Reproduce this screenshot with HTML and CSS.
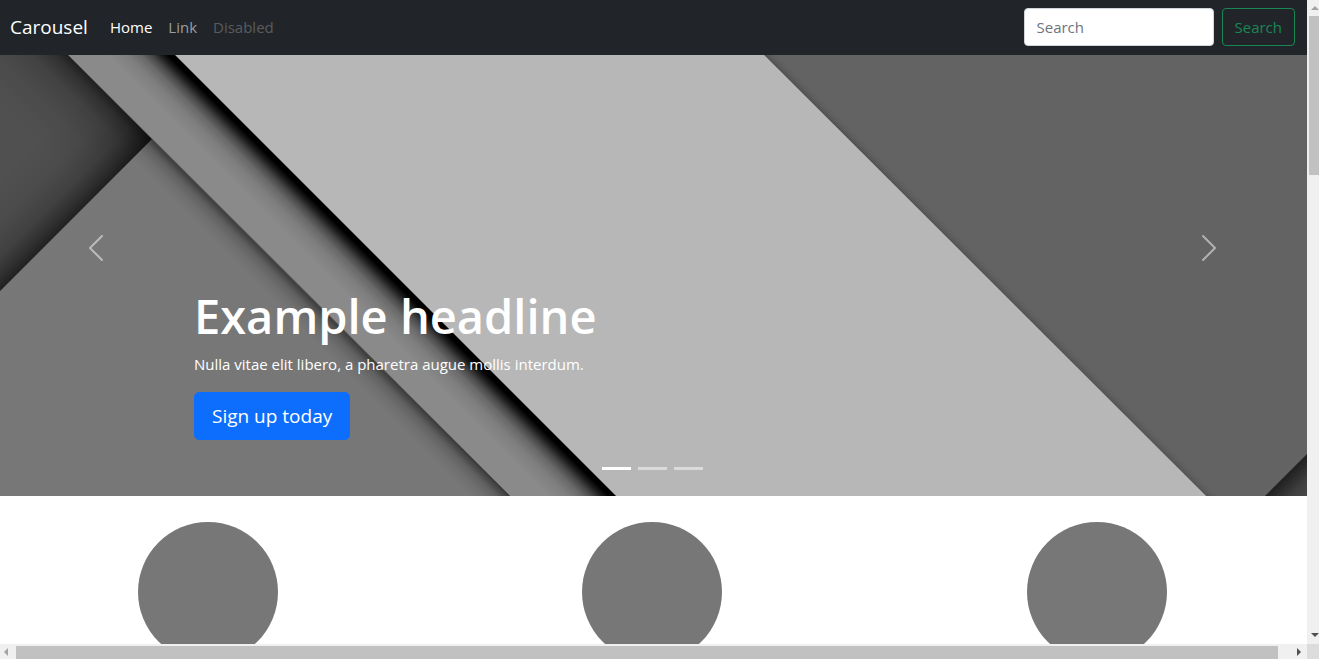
FILE: index.html
```html
<!DOCTYPE html>
<html lang="en">
<head>
<meta charset="utf-8">
<title>Carousel</title>
<link rel="stylesheet" href="styles.css">
</head>
<body>
<div class="frame">
  <div class="page">
    <header class="navbar">
      <a class="brand" href="#">Carousel</a>
      <nav class="nav">
        <a class="nav-link active" href="#">Home</a>
        <a class="nav-link" href="#">Link</a>
        <a class="nav-link disabled" href="#" aria-disabled="true">Disabled</a>
      </nav>
      <form class="search">
        <input class="search-input" type="search" placeholder="Search" aria-label="Search">
        <button class="btn btn-outline" type="button">Search</button>
      </form>
    </header>
    <main>
      <section class="carousel">
        <svg class="backdrop" viewBox="0 0 1307 441" preserveAspectRatio="xMidYMid slice" aria-hidden="true">
          <defs>
            <linearGradient id="deep" gradientUnits="userSpaceOnUse" x1="175" y1="0" x2="141" y2="34">
              <stop offset="0" stop-color="#000"/>
              <stop offset=".1" stop-color="#000"/>
              <stop offset=".2" stop-color="#000" stop-opacity=".82"/>
              <stop offset=".35" stop-color="#000" stop-opacity=".48"/>
              <stop offset=".5" stop-color="#000" stop-opacity=".24"/>
              <stop offset=".7" stop-color="#000" stop-opacity=".09"/>
              <stop offset="1" stop-color="#000" stop-opacity="0"/>
            </linearGradient>
            <linearGradient id="soft" gradientUnits="userSpaceOnUse" x1="68" y1="0" x2="48" y2="20">
              <stop offset="0" stop-color="#000" stop-opacity=".5"/>
              <stop offset=".3" stop-color="#000" stop-opacity=".2"/>
              <stop offset=".65" stop-color="#000" stop-opacity=".06"/>
              <stop offset="1" stop-color="#000" stop-opacity="0"/>
            </linearGradient>
            <linearGradient id="cornerA" gradientUnits="userSpaceOnUse" x1="68" y1="0" x2="8" y2="60">
              <stop offset="0" stop-color="#000" stop-opacity=".62"/>
              <stop offset=".12" stop-color="#000" stop-opacity=".38"/>
              <stop offset=".3" stop-color="#000" stop-opacity=".18"/>
              <stop offset=".6" stop-color="#000" stop-opacity=".06"/>
              <stop offset="1" stop-color="#000" stop-opacity="0"/>
            </linearGradient>
            <linearGradient id="cornerB" gradientUnits="userSpaceOnUse" x1="76" y1="160" x2="20" y2="104">
              <stop offset="0" stop-color="#000" stop-opacity=".6"/>
              <stop offset=".12" stop-color="#000" stop-opacity=".42"/>
              <stop offset=".3" stop-color="#000" stop-opacity=".2"/>
              <stop offset=".6" stop-color="#000" stop-opacity=".06"/>
              <stop offset="1" stop-color="#000" stop-opacity="0"/>
            </linearGradient>
            <linearGradient id="edge" gradientUnits="userSpaceOnUse" x1="765" y1="0" x2="771" y2="-6">
              <stop offset="0" stop-color="#000" stop-opacity=".16"/>
              <stop offset=".5" stop-color="#000" stop-opacity=".05"/>
              <stop offset="1" stop-color="#000" stop-opacity="0"/>
            </linearGradient>
            <linearGradient id="fold" gradientUnits="userSpaceOnUse" x1="1287" y1="421" x2="1311" y2="445">
              <stop offset="0" stop-color="#222"/>
              <stop offset=".5" stop-color="#3f3f3f"/>
              <stop offset="1" stop-color="#4b4b4b"/>
            </linearGradient>
          </defs>
          <path fill="#777" d="M0 0H700V441H0z"/>
          <path fill="url(#soft)" d="M152 84L510 441H460L127 109z"/>
          <path fill="#505050" d="M0 0H68L152 84L0 236z"/>
          <path fill="url(#cornerA)" d="M0 0H68L152 84L0 236z"/>
          <path fill="url(#cornerB)" d="M0 0H68L152 84L0 236z"/>
          <path fill="#8a8a8a" d="M68 0H175L616 441H510z"/>
          <path fill="url(#deep)" d="M68 0H175L616 441H510z"/>
          <path fill="#b7b7b7" d="M175 0H764L1206 441H616z"/>
          <path fill="#636363" d="M764 0H1307V441H1206z"/>
          <path fill="url(#edge)" d="M764 0H785L1227 441H1206z"/>
          <path fill="url(#fold)" d="M1307 399V441H1265z"/>
          <path fill="none" stroke="#505050" stroke-width="1" d="M68 0L510 441M175 0L616 441"/>
        </svg>
        <button class="control" type="button" aria-label="Previous">
          <svg class="chevron" viewBox="0 0 16 16" aria-hidden="true"><path d="M11.354 1.646a.5.5 0 0 1 0 .708L5.707 8l5.647 5.646a.5.5 0 0 1-.708.708l-6-6a.5.5 0 0 1 0-.708l6-6a.5.5 0 0 1 .708 0z"/></svg>
        </button>
        <div class="caption">
          <h1 class="headline">Example headline</h1>
          <p class="lead">Nulla vitae elit libero, a pharetra augue mollis interdum.</p>
          <a class="btn btn-primary" href="#">Sign up today</a>
        </div>
        <button class="control" type="button" aria-label="Next">
          <svg class="chevron" viewBox="0 0 16 16" aria-hidden="true"><path d="M4.646 1.646a.5.5 0 0 1 .708 0l6 6a.5.5 0 0 1 0 .708l-6 6a.5.5 0 0 1-.708-.708L10.293 8 4.646 2.354a.5.5 0 0 1 0-.708z"/></svg>
        </button>
        <div class="indicators">
          <button class="indicator current" type="button" aria-label="Slide 1"></button>
          <button class="indicator" type="button" aria-label="Slide 2"></button>
          <button class="indicator" type="button" aria-label="Slide 3"></button>
        </div>
      </section>
      <section class="features">
        <div class="circle"></div>
        <div class="circle"></div>
        <div class="circle"></div>
      </section>
    </main>
  </div>
  <div class="bar bar-y" aria-hidden="true">
    <svg class="arrow" viewBox="0 0 16 16"><path fill="#a3a3a3" d="M4 10L8 6L12 10z"/></svg>
    <div class="track"><div class="thumb"></div></div>
    <svg class="arrow" viewBox="0 0 16 16"><path fill="#505050" d="M4 5L8 9L12 5z"/></svg>
  </div>
  <div class="bar bar-x" aria-hidden="true">
    <svg class="arrow" viewBox="0 0 16 16"><path fill="#a3a3a3" d="M8 4L4 8L8 12z"/></svg>
    <div class="track"><div class="thumb"></div></div>
    <svg class="arrow" viewBox="0 0 16 16"><path fill="#505050" d="M6 4L10 8L6 12z"/></svg>
  </div>
  <div class="corner"></div>
</div>
</body>
</html>
```
FILE: styles.css
```css
* { box-sizing: border-box; }

body {
  margin: 0;
  font-family: "Open Sans", "Noto Sans", sans-serif;
  font-size: 15px;
  line-height: 24px;
  color: #5a5a5a;
  background: #fff;
}

.frame {
  display: grid;
  grid-template-columns: minmax(0, 1fr) 12px;
  grid-template-rows: minmax(0, 1fr) 15px;
  height: 100vh;
  overflow: hidden;
}

.page { overflow: hidden; }

.navbar {
  display: flex;
  align-items: center;
  padding: 8px 12px 9px 10px;
  background: #212529;
}

.brand {
  margin-right: 14px;
  font-size: 19px;
  color: #fff;
  text-decoration: none;
}

.nav { display: flex; flex: 1; }

.nav-link {
  padding: 7px 8px;
  color: #9b9d9e;
  text-decoration: none;
}

.nav-link.active { color: #fff; }
.nav-link.disabled { color: #595c5f; }

.search { display: flex; gap: 8px; }

.search-input {
  width: 190px;
  height: 38px;
  padding: 6px 12px;
  border: 1px solid #ced4da;
  border-radius: 4px;
  font: inherit;
  background: #fff;
  appearance: none;
}

.search-input::placeholder { color: #6c757d; opacity: 1; }

.btn {
  border: 1px solid;
  border-radius: 4px;
  font: inherit;
  text-decoration: none;
}

.btn-outline {
  padding: 6px 12px;
  border-color: #198754;
  color: #198754;
  background: transparent;
}

.btn-primary {
  display: inline-block;
  padding: 9px 17px;
  border-color: #0d6efd;
  border-radius: 5px;
  font-size: 19px;
  line-height: 28px;
  color: #fff;
  background: #0d6efd;
}

.carousel {
  position: relative;
  display: flex;
  min-height: 441px;
  color: #fff;
}

.backdrop {
  position: absolute;
  inset: 0;
  width: 100%;
  height: 100%;
}

.control {
  position: relative;
  display: flex;
  align-items: center;
  justify-content: center;
  width: 194px;
  padding: 0 2px 55px 0;
  border: 0;
  background: none;
  opacity: 0.5;
}

.chevron { width: 32px; height: 32px; fill: #fff; }

.caption {
  position: relative;
  display: flex;
  flex: 1;
  flex-direction: column;
  align-items: flex-start;
  justify-content: flex-end;
  padding-bottom: 56px;
}

.headline {
  margin: 0 0 8px;
  font-size: 47px;
  font-weight: 600;
  line-height: 56px;
}

.lead {
  margin: 0 0 16px;
  font-weight: 500;
}

.indicators {
  position: absolute;
  right: 2px;
  bottom: 26px;
  left: 0;
  display: flex;
  justify-content: center;
  gap: 7px;
}

.indicator {
  width: 29px;
  height: 3px;
  padding: 0;
  border: 0;
  background: #fff;
  opacity: 0.5;
}

.indicator.current { opacity: 1; }

.features {
  display: grid;
  grid-template-columns: repeat(3, 1fr);
  justify-items: center;
  margin: 26px -12px 0 -14px;
}

.circle {
  width: 140px;
  height: 140px;
  border-radius: 50%;
  background: #777;
}

.bar { display: flex; min-width: 0; min-height: 0; overflow: hidden; background: #f0f0f0; }
.bar-y { flex-direction: column; }
.arrow { flex: none; width: 16px; height: 16px; }
.track { flex: 1; }
.thumb { background: #c1c1c1; }
.bar-y .thumb { height: 26%; margin-left: 2px; }
.bar-x .thumb { width: 99%; height: 13px; margin-top: 2px; }
.corner { background: #dcdcdc; }
```
